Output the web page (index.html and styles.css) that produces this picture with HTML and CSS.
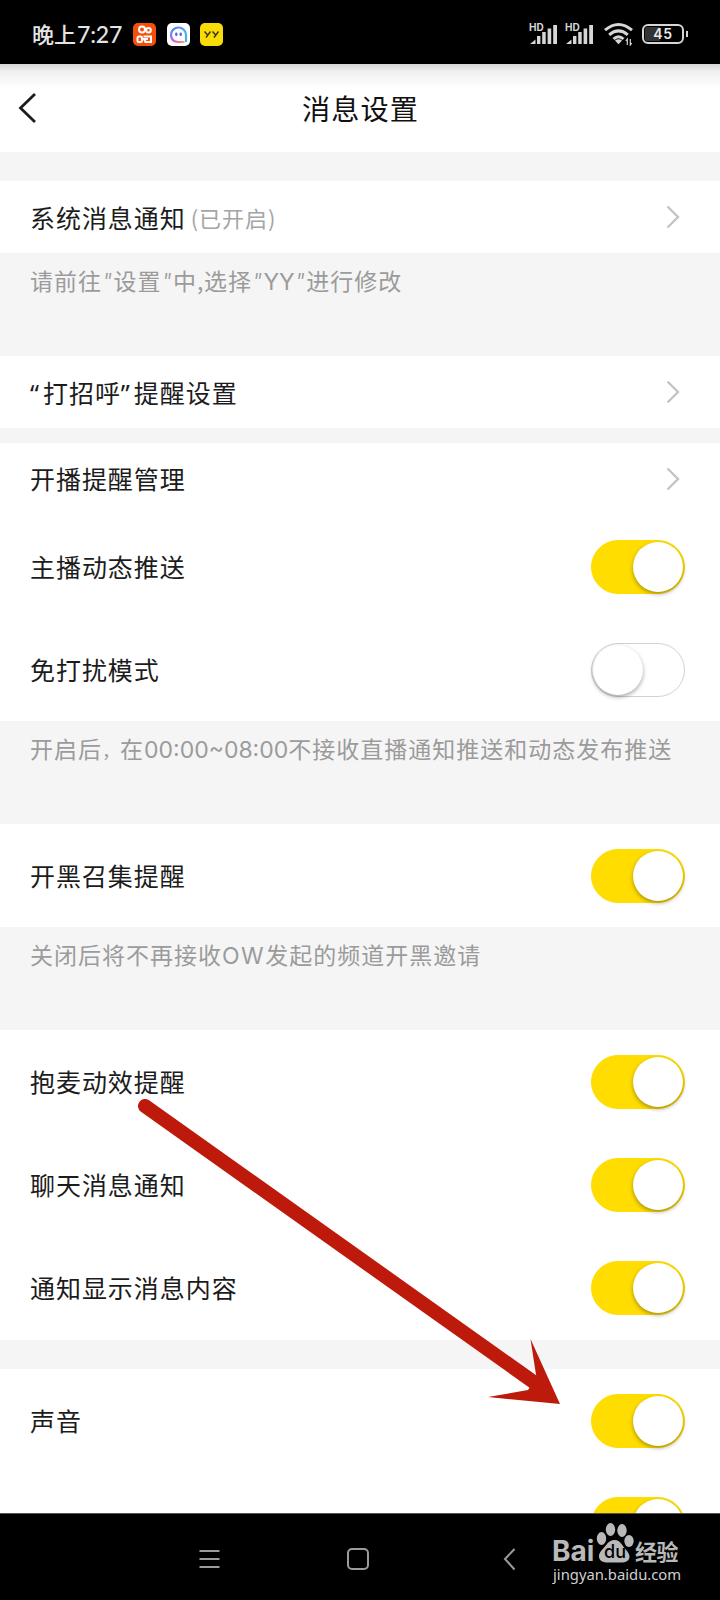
FILE: index.html
```html
<!DOCTYPE html>
<html lang="zh-CN">
<head>
<meta charset="utf-8">
<title>消息设置</title>
<link rel="stylesheet" href="styles.css">
</head>
<body>
<div class="phone">
  <header class="status">
    <span class="time">晚上<span class="clock">7:27</span></span>
    <svg class="app" viewBox="0 0 23 23"><rect width="23" height="23" rx="5" fill="#f4500c"/><g fill="none" stroke="#fff" stroke-width="2"><circle cx="9" cy="6.600" r="3"/><circle cx="15.500" cy="7.300" r="2.300"/><rect x="4.500" y="13.500" width="4.500" height="5.500" rx="1.500"/><path d="M10.500 13.500H18v5.500h-5.500l-1.500-3h4"/></g></svg>
    <svg class="app" viewBox="0 0 23 23"><defs><linearGradient id="ring" x1="0" y1="0" x2="1" y2="1"><stop offset="0" stop-color="#6175f5"/><stop offset=".5" stop-color="#55a6f2"/><stop offset="1" stop-color="#38b9ef"/></linearGradient><linearGradient id="base" x1="0" y1="0" x2="1" y2="0"><stop offset="0" stop-color="#a366f0"/><stop offset=".55" stop-color="#f06aae"/><stop offset="1" stop-color="#f7b24f"/></linearGradient></defs><rect width="23" height="23" rx="5" fill="#fff"/><path d="M4 12.500A7.500 7.500 0 0 1 19 11.500V19" fill="none" stroke="url(#ring)" stroke-width="2.200"/><path d="M4 11.500Q4 18.900 11.500 19H17.500" fill="none" stroke="url(#base)" stroke-width="2.200"/><path d="M9.300 10.800v1M13.700 10.800v1" stroke="#5864d8" stroke-width="2.400" stroke-linecap="round"/></svg>
    <svg class="app" viewBox="0 0 23 23"><rect width="23" height="23" rx="5" fill="#f8dc05"/><path d="M4.500 8.500l3 3.200M10.500 8.500L6 14.500M12.500 8.500l3 3.200M18.500 8.500L14 14.500" fill="none" stroke="#3b3410" stroke-width="1.400"/></svg>
    <div class="indicators">
      <div class="signal"><span class="hd">HD</span><svg viewBox="0 0 28 21" width="28" height="21"><path d="M0 20l5.500-4.500V20zM7 12h3.400v8H7zM12.200 8h3.500v12h-3.500zM17.600 4.500h3.600V20h-3.600zM23.200 1H27v19h-3.800z" fill="#d6d6d6"/></svg></div>
      <div class="signal"><span class="hd">HD</span><svg viewBox="0 0 28 21" width="28" height="21"><path d="M0 20l5.500-4.500V20zM7 12h3.400v8H7zM12.200 8h3.500v12h-3.500zM17.600 4.500h3.600V20h-3.600zM23.200 1H27v19h-3.800z" fill="#d6d6d6"/></svg></div>
      <svg class="wifi" viewBox="0 0 30 24" width="30" height="24"><g fill="none" stroke="#d6d6d6" stroke-width="3"><path d="M1 8.200Q14.500-3.200 28 8.200M5.200 12.800Q14.500 5 23.800 12.800M9.500 17Q14.500 12.500 19.500 17"/></g><path d="M11 18.500q3.500-2.500 7 0l-3.500 3.700z" fill="#d6d6d6"/><path d="M23.300 23v-6l-1.500 2M26.300 17v6l1.500-2" fill="none" stroke="#d6d6d6" stroke-width="1.200"/></svg>
      <div class="battery"><span class="cell"><span class="level">45</span></span><i class="pole"></i></div>
    </div>
  </header>

  <main class="screen">
    <div class="titlebar">
      <svg class="back" viewBox="0 0 20 32" width="20" height="32"><path d="M17 2L2.500 16 17 30" fill="none" stroke="#1d1d1d" stroke-width="2.800"/></svg>
      <h1 class="title">消息设置</h1>
    </div>
    <div class="gap"></div>
    <div class="row link"><span class="label">系统消息通知</span><span class="state">(已开启)</span><svg class="chevron" viewBox="0 0 14 24"><path d="M1.500 1.500L12 12 1.500 22.500"/></svg></div>
    <p class="hint">请前往<i class="quote">"</i>设置<i class="quote">"</i>中<span class="comma">,</span>选择<i class="quote">"</i><span class="latin">YY</span><i class="quote">"</i>进行修改</p>
    <div class="row link"><span class="label"><span class="curly">“</span>打招呼<span class="curly">”</span>提醒设置</span><svg class="chevron" viewBox="0 0 14 24"><path d="M1.500 1.500L12 12 1.500 22.500"/></svg></div>
    <div class="gap small"></div>
    <div class="row link raised"><span class="label">开播提醒管理</span><svg class="chevron" viewBox="0 0 14 24"><path d="M1.500 1.500L12 12 1.500 22.500"/></svg></div>
    <div class="row"><span class="label">主播动态推送</span><span class="switch on"></span></div>
    <div class="row"><span class="label">免打扰模式</span><span class="switch"></span></div>
    <p class="hint">开启后<span class="wide-comma">，</span>在<span class="latin">00:00~08:00</span>不接收直播通知推送和动态发布推送</p>
    <div class="row"><span class="label">开黑召集提醒</span><span class="switch on"></span></div>
    <p class="hint">关闭后将不再接收<span class="latin loose">OW</span>发起的频道开黑邀请</p>
    <div class="row"><span class="label">抱麦动效提醒</span><span class="switch on"></span></div>
    <div class="row"><span class="label">聊天消息通知</span><span class="switch on"></span></div>
    <div class="row last"><span class="label">通知显示消息内容</span><span class="switch on"></span></div>
    <div class="gap"></div>
    <div class="row"><span class="label">声音</span><span class="switch on"></span></div>
    <div class="row"><span class="switch on"></span></div>
  </main>

  <nav class="nav">
    <svg viewBox="0 0 360 60" width="360" height="60" fill="none" stroke="#9b9b9b" stroke-width="2"><path d="M19.500 20h20M19.500 28h20M19.500 36h20"/><rect x="168" y="18" width="20" height="20" rx="4"/><path d="M334.500 18L325 28l9.500 10.500"/></svg>
  </nav>

  <svg class="arrow" viewBox="0 0 430 320" width="430" height="320"><path d="M10 16L400 293" stroke="#bd1a0b" stroke-width="14" stroke-linecap="round"/><path d="M425 314L395.500 249 401.500 288 393 300 353 307z" fill="#bd1a0b"/></svg>

  <div class="watermark">
    <div class="brand">
      <span class="bai">Bai</span>
      <span class="paw"><svg viewBox="0 0 38 42" width="38" height="42" fill="#b9b9b9"><ellipse cx="5.500" cy="15.500" rx="4.700" ry="6.500"/><ellipse cx="14.500" cy="6.500" rx="4.700" ry="6.500"/><ellipse cx="26" cy="7.500" rx="4.700" ry="6.500"/><ellipse cx="33" cy="18" rx="4.700" ry="6"/><path d="M18.500 17C25 17 26 23 31 28c5 6 2 11-4 11.500H10C3 39 1 33 5 28 11 22 12 17 18.500 17z"/></svg><span class="du">du</span></span>
      <span class="jingyan">经验</span>
    </div>
    <div class="url">jingyan.baidu.com</div>
  </div>
</div>
</body>
</html>
```
FILE: styles.css
```css
* { box-sizing: border-box; }
body { margin: 0; font-family: "Noto Sans CJK SC", sans-serif; }
svg { display: block; flex: none; }

.phone {
  position: relative;
  display: flex;
  flex-direction: column;
  width: 720px;
  height: 1600px;
  overflow: hidden;
  background: #fff;
}

.status {
  display: flex;
  flex: none;
  align-items: center;
  height: 64px;
  padding: 4px 32px 0;
  background: #000;
  color: #e4e4e4;
}
.time { width: 101px; padding-bottom: 2px; font-size: 22px; font-weight: 500; white-space: nowrap; }
.clock { margin-left: 1px; font-family: Lato, sans-serif; font-size: 23px; letter-spacing: -.2px; }
.app { width: 23px; height: 23px; margin-right: 10.500px; }
.indicators { display: flex; align-items: center; margin-left: auto; }
.signal { position: relative; width: 36px; }
.hd {
  position: absolute;
  left: -1px;
  top: -1px;
  color: #d6d6d6;
  font: 700 10px/9px Inter, sans-serif;
}
.wifi { margin: 0 8px 0 2px; }
.battery { display: flex; align-items: center; gap: 2px; }
.cell {
  display: block;
  width: 42px;
  height: 20px;
  padding: 1px;
  border: 2px solid #d6d6d6;
  border-radius: 6px;
}
.level {
  display: block;
  height: 14px;
  background: linear-gradient(90deg, #333 42%, transparent 42%);
  border-radius: 2px;
  color: #e8e8e8;
  font: 600 14px/14px Inter, sans-serif;
  letter-spacing: .6px;
  text-align: center;
}
.pole { width: 2px; height: 6px; background: #d6d6d6; }

.screen { flex: none; height: 1449px; overflow: hidden; background: #fff; }
.titlebar {
  display: grid;
  grid-template-columns: 60px 1fr 60px;
  align-items: center;
  height: 88px;
  background: linear-gradient(#d6d6d6, #efefef 7px, #fff 24px);
}
.back { margin-left: 17.500px; }
.title {
  margin: 0;
  padding: 0 0 1px 1px;
  color: #111;
  font-size: 28.200px;
  font-weight: 400;
  letter-spacing: 1px;
  text-align: center;
}
.gap { height: 29px; background: #f5f5f5; }
.gap.small { height: 15px; }
.row {
  display: flex;
  align-items: center;
  height: 103px;
  padding: 0 35px 0 30px;
  color: #1c1c1c;
  font-size: 25px;
  letter-spacing: .950px;
  white-space: nowrap;
}
.row.link { height: 72px; padding-right: 40px; }
.row.last { height: 104px; }
.label { padding-bottom: 2px; }
.row.link .label { padding-bottom: 0; }
.row.raised .label { padding-bottom: 2px; }
.state { margin-left: 5px; color: #a5a5a5; font-size: 22px; }
.chevron {
  width: 14px;
  height: 24px;
  margin-left: auto;
  fill: none;
  stroke: #c4c4c4;
  stroke-width: 2.400;
}
.hint {
  height: 103px;
  margin: 0;
  padding: 9px 30px 0;
  background: #f5f5f5;
  color: #9b9b9b;
  font-size: 23px;
  font-weight: 400;
  line-height: 36px;
  letter-spacing: 1px;
  white-space: nowrap;
}
.latin { font-family: Inter, sans-serif; letter-spacing: 0; }
.latin.loose { letter-spacing: 1.500px; }
.quote, .comma, .wide-comma, .curly { display: inline-block; letter-spacing: 0; }
.quote { width: 11.500px; font-family: Inter, sans-serif; font-weight: 300; }
.comma { width: 7px; }
.wide-comma { width: 18px; font-size: 18px; }
.curly { width: 13px; font-family: "Noto Sans", sans-serif; }

.switch {
  display: flex;
  align-items: center;
  width: 94px;
  height: 54px;
  margin-left: auto;
  padding: 1px;
  border: 1px solid #d2d2d2;
  border-radius: 27px;
}
.switch::before {
  content: "";
  width: 50px;
  height: 50px;
  border-radius: 50%;
  background: #fff;
  box-shadow: 0 2px 4px rgba(0, 0, 0, .35);
}
.switch.on { justify-content: flex-end; border-color: #fd0; background: #fd0; }

.nav {
  display: flex;
  justify-content: center;
  height: 87px;
  padding-top: 17px;
  border-top: 1px solid #555;
  background: #000;
}

.arrow { position: absolute; left: 135px; top: 1090px; }

.watermark { position: absolute; left: 552px; top: 1523px; color: #b9b9b9; }
.brand { display: flex; align-items: flex-end; height: 42px; }
.bai { width: 44px; font: 700 28px/27px Inter, sans-serif; }
.paw { position: relative; width: 39px; }
.du {
  position: absolute;
  left: 8px;
  bottom: 3px;
  color: #000;
  font: 500 18px/20px Inter, sans-serif;
}
.jingyan { font-size: 22px; font-weight: 700; line-height: 30px; letter-spacing: -.500px; }
.url {
  padding-left: 1px;
  color: #d0d0d0;
  font: 400 14.800px/18px "Noto Sans", sans-serif;
}
```
